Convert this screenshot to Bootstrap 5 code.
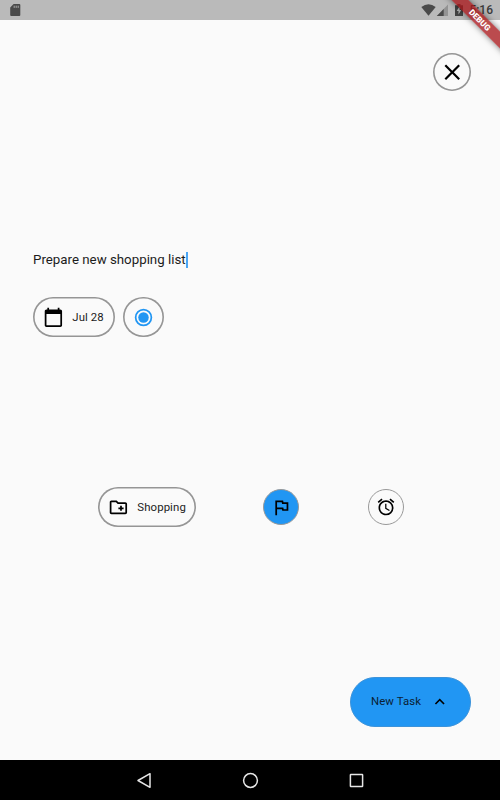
<!DOCTYPE html>
<html lang="en">
<head>
<meta charset="utf-8">
<meta name="viewport" content="width=device-width, initial-scale=1">
<title>New Task</title>
<link rel="stylesheet" href="https://cdn.jsdelivr.net/npm/bootstrap@5.3.0/dist/css/bootstrap.min.css">
<style>
body { font-family: Roboto, "Liberation Sans", sans-serif; background: #fafafa; color: #000; }
svg { display: block; flex: none; }
.screen { width: 500px; height: 800px; }
.statusbar { height: 20px; background: #bababa; padding: 0 7px 0 10px; }
.battery { margin-left: 7px; }
.clock { font-size: 12px; font-weight: 500; line-height: 20px; color: #3c3c3c; margin-left: 6px; }
.ribbon-clip { width: 60px; height: 60px; top: 0; right: 0; }
.ribbon { position: absolute; width: 120px; height: 12px; left: -20px; top: 13.5px; transform: rotate(45deg); background: rgba(168, 22, 26, .77); box-shadow: 0 0 6px rgba(0,0,0,.5); color: #fff; font-size: 8.2px; line-height: 12px; font-weight: 900; text-align: center; }
.pill { height: 40px; box-shadow: inset 0 0 0 1.6px #959595; border-radius: 20px; font-size: 11.4px; letter-spacing: .1px; padding-left: 10px; gap: 8.5px; color: #1c1c1c; }
.pill svg { color: #000; }
.pill span { padding-top: 1.5px; }
.close-btn { width: 38px; height: 38px; border: 0; box-shadow: inset 0 0 0 1.6px #959595; background: #fafafa; padding: 0; }
.top-row { padding: 33px 29px 0; height: 225px; }
.title-row { height: 30px; padding-left: 33px; font-size: 13.3px; color: #1c1c1c; }
.task-title { padding-bottom: 1px; }
.caret { width: 2px; height: 16px; margin-bottom: 1px; background: #4aa6f5; }
.chips { padding: 22px 0 0 33px; gap: 8px; }
.date-pill { width: 82px; }
.radio-pill { width: 41px; padding: 0; }
.options { margin-top: 150px; height: 40px; padding-left: 98px; }
.folder-pill { width: 98px; }
.round { width: 36px; height: 36px; border: 1px solid #999; }
.flag { background: #2196f3; margin-left: 67px; }
.alarm { margin-left: 69px; }
.task-btn { width: 121px; height: 50px; background: #2196f3; border: 1px solid #3c93da; border-radius: 25px; font-size: 11.4px; letter-spacing: .1px; padding: 0 0 0 20px; gap: 9px; color: #0b2135; }
.action-row { padding: 0 29px 33px 0; }
.navbar-sys { height: 40px; background: #000; padding: 0 136px 0 136px; }
</style>
<script src="https://cdn.jsdelivr.net/npm/bootstrap@5.3.0/dist/js/bootstrap.bundle.min.js"></script>
</head>
<body>
<div class="screen d-flex flex-column position-relative overflow-hidden">
  <header class="statusbar d-flex align-items-center flex-shrink-0">
    <svg class="me-auto" width="11" height="12" viewBox="0 0 11 12"><path d="M3.6 0H9.3a1 1 0 0 1 1 1V11a1 1 0 0 1-1 1H1.2a1 1 0 0 1-1-1V3.6z" fill="#4a4a4a"/><path d="M4.2 1.7v2.2M6.2 1.7v2.2M8.2 1.7v2.2" stroke="#aaa" stroke-width="1"/></svg>
    <svg width="15" height="12" viewBox="0 0 15 12"><path d="M7.5 11.7.3 2.9Q7.5-2.6 14.7 2.9z" fill="#4a4a4a"/></svg>
    <svg width="12" height="12" viewBox="0 0 12 12"><path d="M.8 12 12 .6V12z" fill="#939393"/><path d="M.8 12 7.7 5v7z" fill="#4a4a4a"/></svg>
    <svg class="battery" width="8" height="12" viewBox="0 0 8 12"><path d="M0 1.3h2.3V0h3.2v1.3H8V12H0z" fill="#444"/><path d="M4.6 2.3 1.7 7h1.8v3.5L6.3 6H4.6z" fill="#bababa"/></svg>
    <span class="clock">5:16</span>
  </header>

  <main class="d-flex flex-column flex-grow-1">
    <div class="top-row d-flex justify-content-end align-items-start">
      <button class="close-btn rounded-circle d-flex align-items-center justify-content-center" aria-label="Close">
        <svg width="26.5" height="26.5" viewBox="0 0 24 24"><path d="M19 6.41 17.59 5 12 10.59 6.41 5 5 6.41 10.59 12 5 17.59 6.41 19 12 13.41 17.59 19 19 17.59 13.41 12z"/></svg>
      </button>
    </div>
    <div class="title-row d-flex align-items-center"><span class="task-title">Prepare new shopping list</span><span class="caret"></span></div>
    <div class="chips d-flex">
      <div class="pill date-pill d-flex align-items-center">
        <svg width="20.8" height="20.8" viewBox="0 0 24 24"><path d="M20 3h-1V1h-2v2H7V1H5v2H4c-1.1 0-2 .9-2 2v16c0 1.1.9 2 2 2h16c1.1 0 2-.9 2-2V5c0-1.1-.9-2-2-2zm0 18H4V8h16v13z"/></svg>
        <span>Jul 28</span>
      </div>
      <div class="pill radio-pill d-flex align-items-center justify-content-center">
        <svg width="21" height="21" viewBox="0 0 24 24" fill="#2196f3"><circle cx="12" cy="12" r="6"/><circle cx="12" cy="12" r="9" fill="none" stroke="#2196f3" stroke-width="2"/></svg>
      </div>
    </div>
    <div class="options d-flex align-items-center">
      <div class="pill folder-pill d-flex align-items-center">
        <svg width="20.8" height="20.8" viewBox="0 0 24 24"><path d="M20 6h-8l-2-2H4c-1.11 0-1.99.89-1.99 2L2 18c0 1.11.89 2 2 2h16c1.11 0 2-.89 2-2V8c0-1.11-.89-2-2-2zm0 12H4V6h5.17l2 2H20v10zm-8-4h2v2h2v-2h2v-2h-2v-2h-2v2h-2z"/></svg>
        <span>Shopping</span>
      </div>
      <div class="round flag rounded-circle d-flex align-items-center justify-content-center">
        <svg width="20.8" height="20.8" viewBox="0 0 24 24"><path d="m12.36 6 .4 2H18v6h-3.36l-.4-2H7V6h5.36M14 4H5v17h2v-7h5.6l.4 2h7V6h-5.6L14 4z"/></svg>
      </div>
      <div class="round alarm rounded-circle d-flex align-items-center justify-content-center">
        <svg width="20" height="20" viewBox="0 0 24 24"><path d="m22 5.72-4.6-3.86-1.29 1.53 4.6 3.86L22 5.72zM7.88 3.39 6.6 1.86 2 5.71l1.29 1.53 4.59-3.85zM12.5 8H11v6l4.75 2.85.75-1.23-4-2.37V8zM12 4c-4.97 0-9 4.03-9 9s4.02 9 9 9a9 9 0 0 0 0-18zm0 16c-3.87 0-7-3.13-7-7s3.13-7 7-7 7 3.13 7 7-3.13 7-7 7z"/></svg>
      </div>
    </div>
    <div class="action-row d-flex justify-content-end mt-auto">
      <button class="task-btn d-flex align-items-center"><span>New Task</span>
        <svg width="19.5" height="19.5" viewBox="0 0 24 24"><path d="m12 8-6 6 1.41 1.41L12 10.83l4.59 4.58L18 14z"/></svg>
      </button>
    </div>
  </main>

  <nav class="navbar-sys d-flex align-items-center justify-content-between flex-shrink-0">
    <svg width="16" height="17" viewBox="0 0 16 17"><path d="M14 1.7v13.6L2 8.5z" fill="none" stroke="#e6e6e6" stroke-width="1.5" stroke-linejoin="round"/></svg>
    <svg width="17" height="17" viewBox="0 0 17 17"><circle cx="8.5" cy="8.5" r="6.9" fill="none" stroke="#e6e6e6" stroke-width="1.5"/></svg>
    <svg width="15" height="15" viewBox="0 0 15 15"><rect x="1.4" y="1.4" width="12.2" height="12.2" rx=".5" fill="none" stroke="#e6e6e6" stroke-width="1.5"/></svg>
  </nav>
  <div class="ribbon-clip position-absolute overflow-hidden"><div class="ribbon">DEBUG</div></div>
</div>
</body>
</html>
